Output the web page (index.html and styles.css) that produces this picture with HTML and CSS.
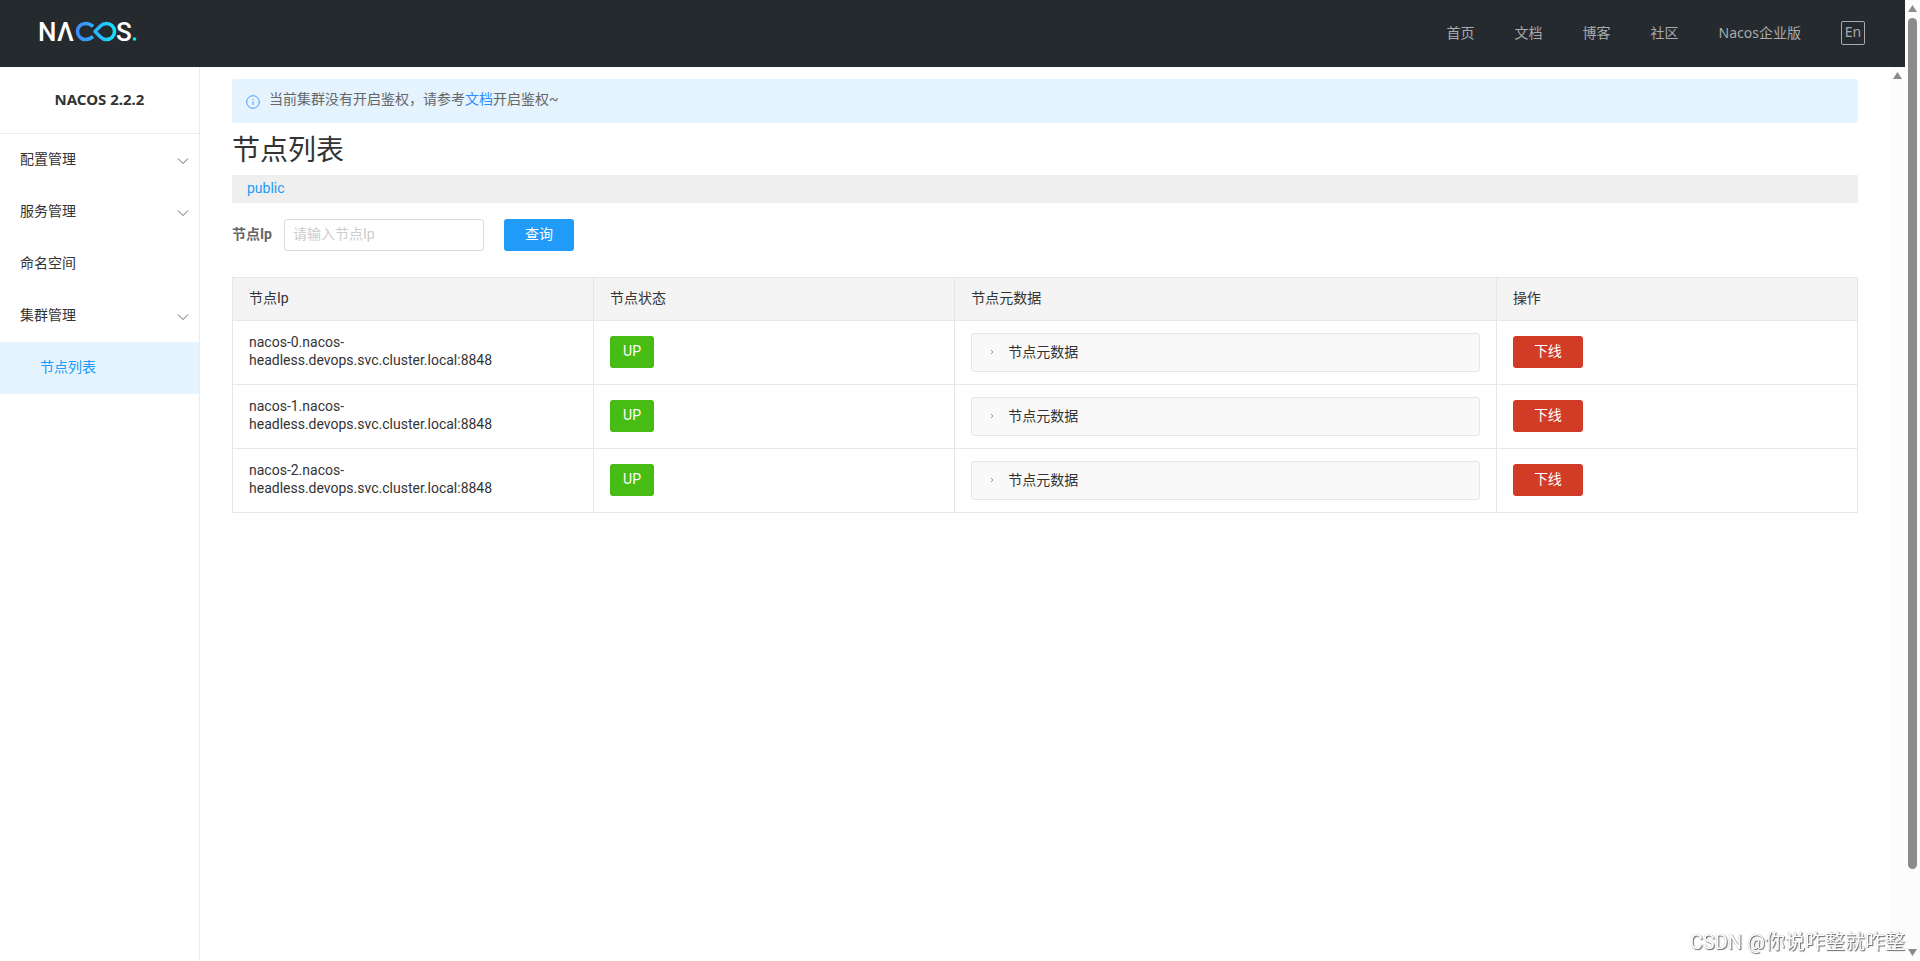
FILE: index.html
```html
<!DOCTYPE html>
<html lang="zh-CN">
<head>
<meta charset="utf-8">
<title>Nacos</title>
<link rel="stylesheet" href="styles.css">
</head>
<body>
<div class="viewport">
  <div class="page">
    <header class="header">
      <a class="logo" href="#" aria-label="Nacos">
        <svg width="104" height="40" viewBox="-2 -7 104 40">
          <defs>
            <linearGradient id="loop" gradientUnits="userSpaceOnUse" x1="36" y1="0" x2="76" y2="0">
              <stop offset="0" stop-color="#4187ff"/>
              <stop offset="1" stop-color="#12e4fa"/>
            </linearGradient>
          </defs>
          <text class="logo-text" x="-2" y="21">N</text>
          <text class="logo-text" x="17" y="21">Λ</text>
          <path d="M53 6.5C51 4.5 48.500 3.500 45.500 3.500C41 3.500 37.500 7 37.500 11.500S41 19.500 45.500 19.500C48.500 19.500 51 18.500 53 16.500M55 11.500L60.500 6C62.500 4 64 3.500 66.500 3.500C71 3.500 74.500 7 74.500 11.500S71 19.500 66.500 19.500C64 19.500 62.500 19 60.500 17Z" fill="none" stroke="url(#loop)" stroke-width="3.500" stroke-linejoin="round"/>
          <text class="logo-text" x="76" y="21">S</text>
          <circle cx="94.500" cy="19" r="1.800" fill="#12e4fa"/>
        </svg>
      </a>
      <nav class="nav">
        <a href="#">首页</a>
        <a href="#">文档</a>
        <a href="#">博客</a>
        <a href="#">社区</a>
        <a href="#">Nacos企业版</a>
        <button class="lang" type="button">En</button>
      </nav>
    </header>
    <div class="body">
      <aside class="sidebar">
        <h1 class="version">NACOS 2.2.2</h1>
        <ul class="menu">
          <li><a class="item" href="#">配置管理<svg class="chevron" viewBox="0 0 12 8"><path d="M1 1.500L6 6.500L11 1.500"/></svg></a></li>
          <li><a class="item" href="#">服务管理<svg class="chevron" viewBox="0 0 12 8"><path d="M1 1.500L6 6.500L11 1.500"/></svg></a></li>
          <li><a class="item" href="#">命名空间</a></li>
          <li><a class="item" href="#">集群管理<svg class="chevron" viewBox="0 0 12 8"><path d="M1 1.500L6 6.500L11 1.500"/></svg></a></li>
          <li><a class="item item-sub" href="#">节点列表</a></li>
        </ul>
      </aside>
      <main class="main">
        <div class="notice">
          <svg class="info" viewBox="0 0 14 14"><circle cx="7" cy="7" r="6.300"/><path d="M7 6.200V10M7 4V5"/></svg>
          <p>当前集群没有开启鉴权，请参考<a href="#">文档</a>开启鉴权~</p>
        </div>
        <h2 class="title">节点列表</h2>
        <div class="namespace"><a href="#">public</a></div>
        <form class="search">
          <label for="ip">节点Ip</label>
          <input id="ip" type="text" placeholder="请输入节点Ip">
          <button class="btn btn-primary" type="button">查询</button>
        </form>
        <table class="nodes">
          <colgroup><col><col><col class="col-meta"><col></colgroup>
          <thead>
            <tr><th>节点Ip</th><th>节点状态</th><th>节点元数据</th><th>操作</th></tr>
          </thead>
          <tbody>
            <tr>
              <td class="cell-ip">nacos-0.nacos-<br>headless.devops.svc.cluster.local:8848</td>
              <td><span class="tag">UP</span></td>
              <td class="cell-meta"><button class="collapse" type="button"><svg class="arrow" viewBox="0 0 4 6"><path d="M1 1L3 3L1 5"/></svg>节点元数据</button></td>
              <td><button class="btn btn-danger" type="button">下线</button></td>
            </tr>
            <tr>
              <td class="cell-ip">nacos-1.nacos-<br>headless.devops.svc.cluster.local:8848</td>
              <td><span class="tag">UP</span></td>
              <td class="cell-meta"><button class="collapse" type="button"><svg class="arrow" viewBox="0 0 4 6"><path d="M1 1L3 3L1 5"/></svg>节点元数据</button></td>
              <td><button class="btn btn-danger" type="button">下线</button></td>
            </tr>
            <tr>
              <td class="cell-ip">nacos-2.nacos-<br>headless.devops.svc.cluster.local:8848</td>
              <td><span class="tag">UP</span></td>
              <td class="cell-meta"><button class="collapse" type="button"><svg class="arrow" viewBox="0 0 4 6"><path d="M1 1L3 3L1 5"/></svg>节点元数据</button></td>
              <td><button class="btn btn-danger" type="button">下线</button></td>
            </tr>
          </tbody>
        </table>
      </main>
      <div class="scrollbar">
        <svg class="scroll-arrow" viewBox="0 0 9 7"><path d="M4.500 0L9 7H0Z"/></svg>
      </div>
    </div>
  </div>
  <div class="scrollbar">
    <svg class="scroll-arrow" viewBox="0 0 9 7"><path d="M4.500 0L9 7H0Z"/></svg>
    <div class="scroll-track"><div class="scroll-thumb"></div></div>
    <svg class="scroll-arrow" viewBox="0 0 9 7"><path d="M0 0H9L4.500 7Z"/></svg>
  </div>
</div>
<div class="watermark">CSDN @你说咋整就咋整</div>
</body>
</html>
```
FILE: styles.css
```css
* { box-sizing: border-box; }

body {
  margin: 0;
  background: #fff;
  color: #333;
  font: 14px/18px Roboto, "Noto Sans CJK SC", sans-serif;
}

a { color: inherit; text-decoration: none; }
button, input { font: inherit; }
button { cursor: pointer; }

.viewport { display: flex; height: 100vh; overflow: hidden; }
.page { flex: 1; display: flex; flex-direction: column; }

/* Header */
.header {
  display: flex;
  align-items: center;
  justify-content: space-between;
  height: 67px;
  padding: 0 40px 2px 38px;
  background: #252a2f;
}
.logo { display: flex; }
.logo-text { fill: #fff; font: 500 26px Roboto, sans-serif; }
.nav {
  display: flex;
  align-items: center;
  gap: 40px;
  color: #a8aaac;
  font-family: "Noto Sans", "Noto Sans CJK SC", sans-serif;
}
.lang {
  width: 24px;
  height: 24px;
  padding: 0 0 2px;
  border: 1px solid #a8aaac;
  border-radius: 2px;
  background: none;
  color: inherit;
  line-height: 20px;
}

.body { flex: 1; display: flex; min-height: 0; }

/* Sidebar */
.sidebar { width: 200px; border-right: 1px solid #ebebeb; }
.version {
  margin: 0;
  padding-bottom: 2px;
  border-bottom: 1px solid #ebebeb;
  font: bold 15px/64px "Noto Sans", sans-serif;
  text-align: center;
}
.menu { margin: 0; padding: 0; list-style: none; }
.item {
  display: flex;
  align-items: center;
  justify-content: space-between;
  height: 52px;
  padding: 0 10px 2px 20px;
}
.item-sub { padding-left: 40px; background: #e4f3fe; color: #209bfa; }
.chevron { width: 12px; height: 8px; margin-top: 4px; fill: none; stroke: #666; }

/* Content */
.main { flex: 1; padding: 12px 32px; }
.notice {
  display: flex;
  gap: 9px;
  height: 44px;
  padding: 11px 14px;
  border-radius: 3px;
  background: #e4f3fe;
  color: #666;
}
.notice p { margin: 0; }
.notice a { color: #2e8cff; }
.info { width: 14px; height: 14px; margin-top: 5px; fill: none; stroke: #4a9bff; }
.title { margin: 8px 0 4px; font-size: 28px; font-weight: 400; line-height: 40px; }
.namespace { padding: 4px 15px 6px; background: #efefef; color: #209bfa; }
.search { display: flex; align-items: center; margin: 16px 0 26px; }
.search label { margin-right: 12px; padding-bottom: 2px; color: #666; font-weight: bold; }
.search input {
  width: 200px;
  height: 32px;
  margin-right: 20px;
  padding: 0 8px 2px;
  border: 1px solid #d9d9d9;
  border-radius: 3px;
  color: #333;
}
.search input::placeholder { color: #ccc; }
.btn, .tag {
  display: inline-block;
  height: 32px;
  border: 0;
  border-radius: 3px;
  color: #fff;
  line-height: 30px;
  vertical-align: middle;
}
.btn { width: 70px; padding: 0 0 2px; }
.btn-primary { background: #209bfa; }
.btn-danger { background: #d23c26; }
.tag { padding: 0 13px; background: #46bc15; }

/* Node table */
.nodes { width: 100%; border-collapse: collapse; table-layout: fixed; }
.nodes th, .nodes td { padding: 0 16px 2px; border: 1px solid #e6e6e6; text-align: left; }
.nodes th { height: 43px; background: #f4f4f4; font-weight: 400; }
.nodes td { height: 64px; }
.nodes .cell-ip { padding-bottom: 4px; }
.nodes .cell-meta { padding-bottom: 0; }
.col-meta { width: 33.333%; }
.collapse {
  display: flex;
  align-items: center;
  gap: 14px;
  width: 100%;
  height: 39px;
  padding: 0 18px 2px;
  border: 1px solid #e6e6e6;
  border-radius: 3px;
  background: #f9f9f9;
  color: #333;
}
.arrow { width: 4px; height: 6px; fill: none; stroke: #999; }

/* Scrollbars */
.scrollbar {
  display: flex;
  flex-direction: column;
  align-items: center;
  width: 15px;
  padding: 5px 0;
  background: #fcfcfc;
}
.scroll-arrow { width: 9px; height: 7px; fill: #8b8b8b; }
.scroll-track { flex: 1; padding: 6px 0; }
.scroll-thumb { width: 9px; height: 92%; border-radius: 5px; background: #8b8b8b; }

.watermark {
  position: fixed;
  right: 15px;
  bottom: 6px;
  color: #fff;
  font-size: 20px;
  line-height: 26px;
  text-shadow: 1px 1px 1px #666, 0 0 1px #aaa;
}
```
